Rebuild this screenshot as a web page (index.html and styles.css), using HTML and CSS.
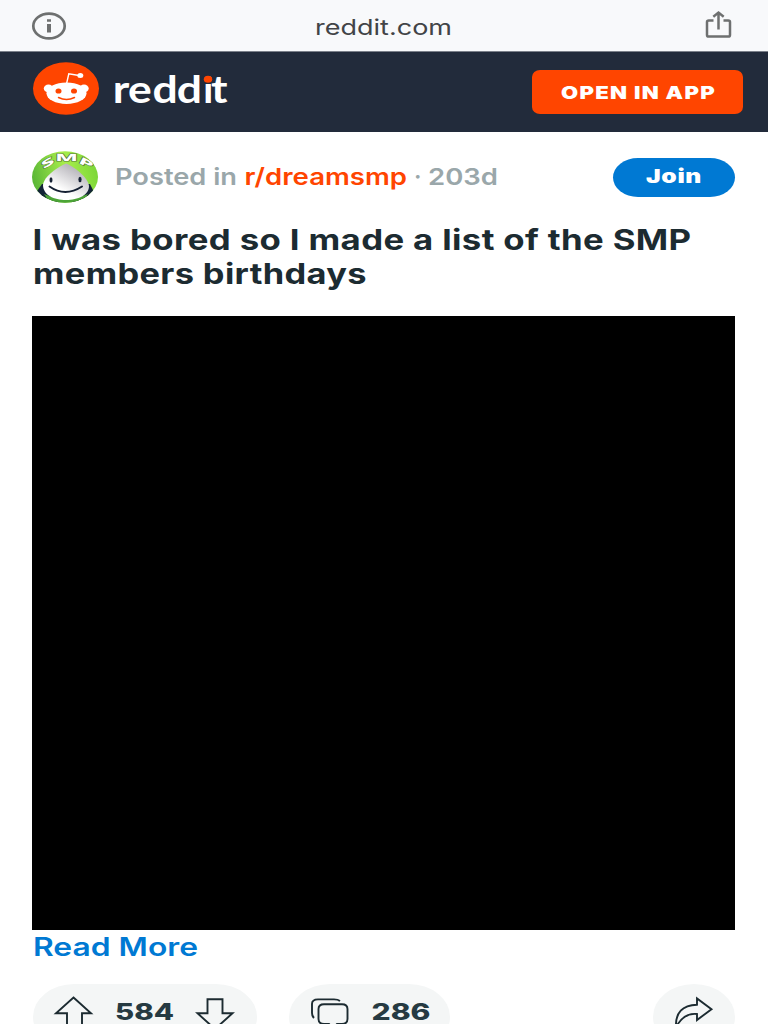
FILE: index.html
```html
<!DOCTYPE html>
<html lang="en">
<head>
<meta charset="utf-8">
<title>reddit.com</title>
<link rel="stylesheet" href="styles.css">
</head>
<body>
<div class="browser-bar">
  <svg class="info-icon" width="36" height="28" viewBox="0 0 36 28"><ellipse cx="18" cy="14" rx="15.7" ry="12.4" fill="none" stroke="#6e7070" stroke-width="2.7"/><path d="M16 7.2h4v2.5h-4zM16 12h4v8.4h-4z" fill="#6e7070"/></svg>
  <svg class="label address" width="138" height="52"><text x="0" y="35" textLength="137" lengthAdjust="spacingAndGlyphs">reddit.com</text></svg>
  <svg class="share-icon" width="28" height="30" viewBox="0 0 28 30" fill="none" stroke="#6e7070" stroke-width="2.5"><path d="M9.500 11.500H4.800Q3 11.500 3 13.100V25.900Q3 27.500 4.800 27.500H24.200Q26 27.500 26 25.900V13.100Q26 11.500 24.200 11.500H19.500M14.500 20.500V4M9.300 7.700L14.500 3.600L19.700 7.700"/></svg>
</div>
<header class="site-header">
  <div class="brand">
    <svg class="logo" width="66" height="53" viewBox="0 0 66 53">
      <ellipse cx="33" cy="26.500" rx="33" ry="26.300" fill="#ff4500"/>
      <path d="M33.500 22L35.800 11.800L46 13.500" fill="none" stroke="#fff" stroke-width="1.400"/>
      <ellipse cx="47.300" cy="13.600" rx="3" ry="2.500" fill="#fff"/>
      <ellipse cx="15.500" cy="26.500" rx="4.700" ry="3.900" fill="#fff"/><ellipse cx="51" cy="26.500" rx="4.700" ry="3.900" fill="#fff"/>
      <ellipse cx="33.500" cy="31.200" rx="20" ry="10.800" fill="#fff"/>
      <ellipse cx="25.500" cy="29" rx="3" ry="2.600" fill="#ff4500"/><ellipse cx="41" cy="29" rx="3" ry="2.600" fill="#ff4500"/>
      <path d="M25.500 35.500Q33.500 39.500 41.500 35.500" fill="none" stroke="#ff4500" stroke-width="1.500" stroke-linecap="round"/>
    </svg>
    <svg class="label wordmark" width="114" height="79"><text transform="scale(1.140 1)" x="-1.200 12.200 33.700 55 78 85.200" y="51">redd<tspan class="short">i</tspan>t</text><ellipse cx="94" cy="27.200" rx="4.200" ry="3.500" fill="#ff4500"/></svg>
  </div>
  <button class="open-app"><svg class="label" width="154" height="44"><text x="0" y="29" textLength="155" lengthAdjust="spacingAndGlyphs">OPEN IN APP</text></svg></button>
</header>
<main class="post">
  <div class="post-meta">
    <svg class="avatar" width="66" height="52" viewBox="0 0 66 52">
      <defs>
        <clipPath id="disc"><ellipse cx="33" cy="26" rx="33" ry="25.700"/></clipPath>
        <linearGradient id="lime" x1="0" x2="1" y1=".6" y2=".4"><stop offset="0" stop-color="#58b536"/><stop offset=".55" stop-color="#a8ee4b"/><stop offset="1" stop-color="#7bd638"/></linearGradient>
        <linearGradient id="skin" x1=".75" x2=".3" y1="0" y2=".65"><stop offset="0" stop-color="#aaa8af"/><stop offset="1" stop-color="#fff"/></linearGradient>
        <path id="arch" d="M11 19Q34 1 59 19"/>
      </defs>
      <g clip-path="url(#disc)">
        <rect width="66" height="52" fill="url(#lime)"/>
        <path d="M10 33L3 43L24 51H44L63 43L58 33Z" fill="#122436"/>
        <path d="M12 43Q34 52 56 43L50 52H18Z" fill="#4ca437"/>
        <path d="M34 12.500C26 16 12 25 11 34C11 44 22 49 34 49C46 49 57 44 57 35C56 26 41 15 34 12.500Z" fill="url(#skin)"/>
        <ellipse cx="19" cy="29" rx="1.500" ry="2.700" fill="#152033"/><ellipse cx="48" cy="28.500" rx="1.600" ry="2.800" fill="#152033"/>
        <path d="M17.500 35.500Q33 46.500 50 35.500" fill="none" stroke="#152033" stroke-width="2" stroke-linecap="round"/>
        <text class="avatar-text"><textPath href="#arch" startOffset="1" textLength="51" lengthAdjust="spacingAndGlyphs">SMP</textPath></text>
      </g>
    </svg>
    <svg class="label byline" width="384" height="52"><text x="0" y="33.500" textLength="122" lengthAdjust="spacingAndGlyphs">Posted in</text><text class="community" x="129.500" y="33.500" textLength="162.500" lengthAdjust="spacingAndGlyphs">r/dreamsmp</text><text x="299" y="33.500">·</text><text x="313" y="33.500" textLength="70" lengthAdjust="spacingAndGlyphs">203d</text></svg>
    <button class="join"><svg class="label" width="56" height="39"><text x="0" y="25.300" textLength="56" lengthAdjust="spacingAndGlyphs">Join</text></svg></button>
  </div>
  <h1 class="title"><svg class="label" width="703" height="78"><text x="-1.500" y="32" textLength="659" lengthAdjust="spacingAndGlyphs">I was bored so I made a list of the SMP</text><text x="-1" y="66" textLength="334" lengthAdjust="spacingAndGlyphs">members birthdays</text></svg></h1>
  <div class="media"></div>
  <a class="read-more"><svg class="label" width="166" height="36"><text x="-1" y="26" textLength="165" lengthAdjust="spacingAndGlyphs">Read More</text></svg></a>
  <div class="actions">
    <div class="pill votes">
      <svg class="icon" width="40" height="54" viewBox="0 0 40 54"><path d="M20.500 13.500L38 29.300H29V43H14V29.300H3Z"/></svg>
      <svg class="label count" width="58" height="64"><text x="0" y="36" textLength="59" lengthAdjust="spacingAndGlyphs">584</text></svg>
      <svg class="icon" width="40" height="54" viewBox="0 0 40 54"><path d="M12.500 15.200H27.500V29.300H37.500L20 45L2.500 29.300H12.500Z"/></svg>
    </div>
    <div class="pill comments">
      <svg class="icon" width="40" height="54" viewBox="0 0 40 54"><path d="M5 34Q3 32 3 29V20Q3 15.400 9 15.400H25Q29 15.400 31 17"/><path d="M24 44L20 40H15Q9.500 40 9.500 35V25Q9.500 20.200 15 20.200H33Q38.500 20.200 38.500 25V35Q38.500 40 33 40H28Z"/></svg>
      <svg class="label count" width="58" height="64"><text x="0.500" y="36" textLength="59" lengthAdjust="spacingAndGlyphs">286</text></svg>
    </div>
    <div class="pill share">
      <svg class="icon" width="40" height="54" viewBox="0 0 40 54"><path d="M1 43Q0 21.500 22 20.700V14.500L36.500 25.200L22 36V30Q9 28.500 1 43Z"/></svg>
    </div>
  </div>
</main>
</body>
</html>
```
FILE: styles.css
```css
* { box-sizing: border-box; }
body { margin: 0; width: 768px; height: 1024px; overflow: hidden; background: #fff; font-family: "Inter", sans-serif; }
svg { display: block; flex: none; overflow: visible; }
button { border: 0; padding: 0; display: flex; justify-content: center; }
.browser-bar { height: 52px; background: #f8f9fb; border-bottom: 1px solid #7b808a; display: flex; align-items: flex-start; padding: 0 36px 0 31px; }
.info-icon { margin-top: 12px; }
.share-icon { margin: 9px 0 0 auto; }
.address { margin-left: 248px; font: 21.500px "Inter", sans-serif; fill: #424447; }
.site-header { height: 80px; background: #222b3b; display: flex; justify-content: space-between; padding: 0 25px 0 33px; }
.brand { display: flex; gap: 15px; }
.logo { margin-top: 10px; }
.wordmark { font: 700 39px "Lato", sans-serif; fill: #fff; }
.short { font-size: 36px; }
.open-app { width: 211px; height: 44px; margin-top: 18px; border-radius: 8px / 7px; background: #ff4500; font: 900 17.500px "Inter", sans-serif; letter-spacing: 1px; fill: #fff; }
.post { padding: 19px 33px 0 32px; }
.post-meta { display: flex; height: 52px; }
.avatar { margin-right: 17px; }
.avatar-text { font: 800 10px "Noto Sans", sans-serif; fill: #fff; stroke: #56763c; stroke-width: .8px; paint-order: stroke; }
.byline { font: 600 23.500px "Inter", sans-serif; fill: #9aa7aa; }
.community { fill: #ff4500; }
.join { width: 122px; height: 39px; margin: 7px 0 0 auto; border-radius: 25px / 19.500px; background: #0079d3; font: 900 19.300px "Inter", sans-serif; letter-spacing: .5px; fill: #fff; }
.title { margin: 15px 0 0 2px; height: 98px; font: 650 28.500px "Inter", sans-serif; letter-spacing: .3px; fill: #1c2b31; }
.media { height: 614px; background: #000; }
.read-more { display: block; height: 54px; padding-left: 2px; font: 600 25px "Inter", sans-serif; fill: #0079d3; }
.actions { display: flex; padding-left: 1px; }
.pill { height: 66px; border-radius: 41px / 33px; background: #f4f6f6; display: flex; }
.votes { width: 224px; padding-left: 20px; gap: 22px; }
.comments { width: 161px; margin-left: 32px; padding-left: 20px; gap: 22px; }
.share { width: 82px; margin-left: auto; padding-left: 22px; }
.count { font: 800 22.500px "Inter", sans-serif; fill: #263a42; }
.icon { fill: none; stroke: #1c2b31; stroke-width: 1.900px; }
```
